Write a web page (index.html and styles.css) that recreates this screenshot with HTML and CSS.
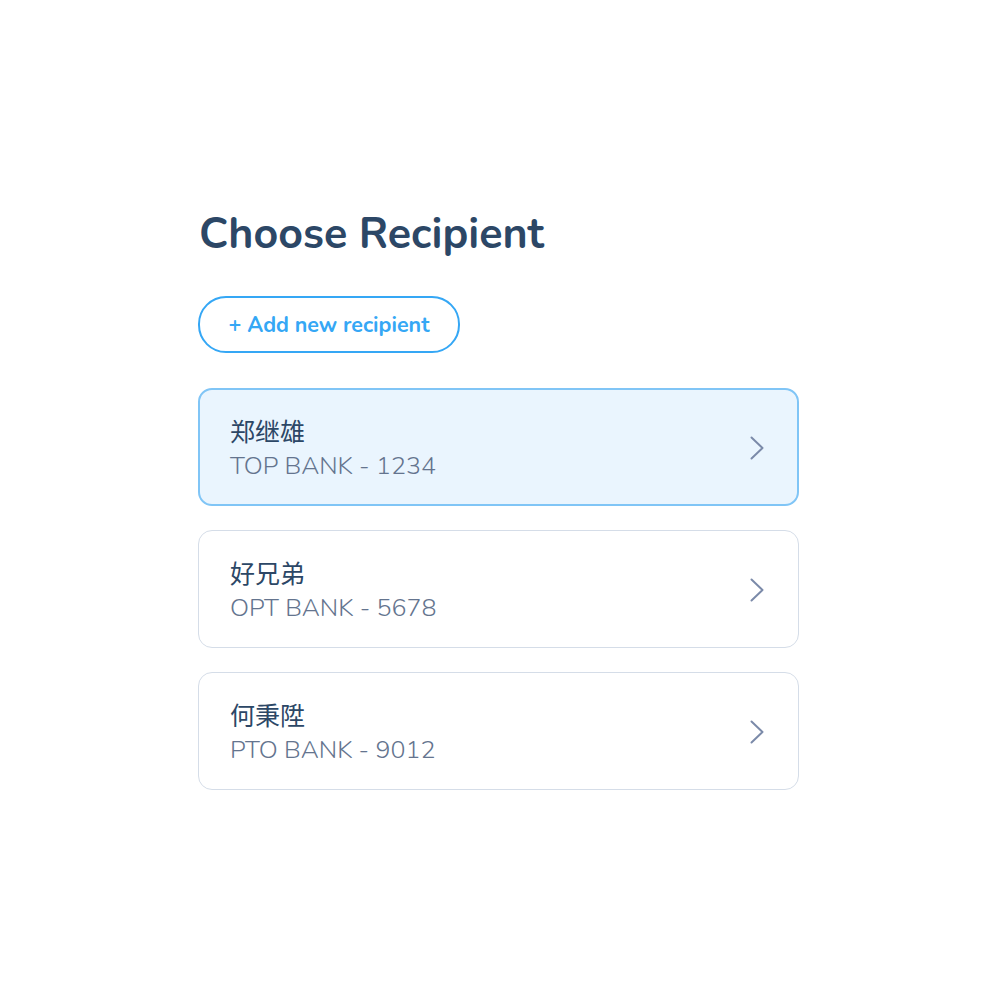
FILE: index.html
```html
<!DOCTYPE html>
<html>
<head>
  <title>Choose Recipient</title>
  <link rel="stylesheet" href="styles.css">
</head>
<body>
  <div class="page">
    <h1 class="title">Choose Recipient</h1>

    <button class="add-btn">+ Add new recipient</button>

    <div class="recipient-list">
      <div class="recipient active">
        <div class="recipient-info">
          <div class="recipient-name">郑继雄</div>
          <div class="recipient-bank">TOP BANK - 1234</div>
        </div>
        <svg class="chevron" width="14" height="24" viewBox="0 0 14 24">
          <path d="M1.5 1.5 L12.5 12 L1.5 22.5" fill="none" stroke="currentColor" stroke-width="2" stroke-linecap="round" stroke-linejoin="round"/>
        </svg>
      </div>

      <div class="recipient">
        <div class="recipient-info">
          <div class="recipient-name">好兄弟</div>
          <div class="recipient-bank">OPT BANK - 5678</div>
        </div>
        <svg class="chevron" width="14" height="24" viewBox="0 0 14 24">
          <path d="M1.5 1.5 L12.5 12 L1.5 22.5" fill="none" stroke="currentColor" stroke-width="2" stroke-linecap="round" stroke-linejoin="round"/>
        </svg>
      </div>

      <div class="recipient">
        <div class="recipient-info">
          <div class="recipient-name">何秉陞</div>
          <div class="recipient-bank">PTO BANK - 9012</div>
        </div>
        <svg class="chevron" width="14" height="24" viewBox="0 0 14 24">
          <path d="M1.5 1.5 L12.5 12 L1.5 22.5" fill="none" stroke="currentColor" stroke-width="2" stroke-linecap="round" stroke-linejoin="round"/>
        </svg>
      </div>
    </div>
  </div>
</body>
</html>
```

FILE: styles.css
```css
body {
  font-family: "Nunito", Lato, "Noto Sans CJK SC", sans-serif;
  background-color: #fff;
  color: #2c4766;
  margin: 0;
  padding: 0;
}

.page {
  width: 601px;
  padding-top: 206px;
  box-sizing: border-box;
  margin-left: 198px;
}

.title {
  font-size: 43px;
  font-weight: 700;
  line-height: 56px;
  margin: 0 0 34px 1px;
  color: #2c4766;
}

.add-btn {
  font-family: inherit;
  font-size: 21.5px;
  font-weight: 700;
  color: #35a7f5;
  background: #fff;
  border: 2px solid #35a7f5;
  border-radius: 28px;
  height: 57px;
  width: 262px;
  padding: 0;
  cursor: pointer;
  display: block;
}

.recipient-list {
  display: flex;
  flex-direction: column;
  gap: 24px;
  margin-top: 35px;
}

.recipient {
  display: flex;
  align-items: center;
  justify-content: space-between;
  height: 118px;
  box-sizing: border-box;
  padding: 2px 34px 0 31px;
  border: 1px solid #d5dde8;
  border-radius: 14px;
  background: #fff;
}

.recipient.active {
  background: #eaf5fe;
  border: 2px solid #80c5f6;
  padding: 2px 33px 0 30px;
}

.recipient-info {
  display: flex;
  flex-direction: column;
}

.recipient-name {
  font-family: "Noto Sans CJK SC", sans-serif;
  font-size: 25px;
  line-height: 36px;
  color: #2c4766;
}

.recipient-bank {
  font-size: 25px;
  font-weight: 300;
  line-height: 36px;
  color: #64748e;
}

.chevron {
  color: #7b8aa9;
}
```
